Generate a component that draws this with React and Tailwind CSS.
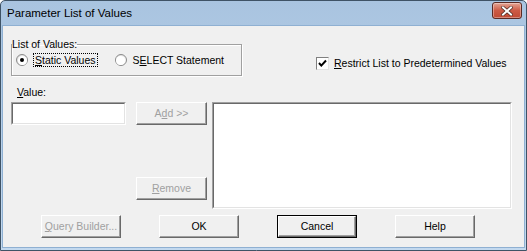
const font = { fontFamily: '"Liberation Sans", Arial, sans-serif' };

function Btn({ children, disabled, isDefault, className = "" }) {
  return (
    <div
      className={`flex h-[23px] items-center justify-center bg-[#f0f0f0] ${
        isDefault ? "border border-black" : ""
      } ${className}`}
    >
      <div className="flex h-full w-full items-center justify-center border-t border-l border-r border-b border-t-white border-l-white border-r-[#696969] border-b-[#696969] shadow-[inset_-1px_-1px_0_#a0a0a0]">
        <span className={`text-[10.5px] leading-none ${disabled ? "text-[#a0a0a0]" : "text-black"}`}>
          {children}
        </span>
      </div>
    </div>
  );
}

function Sunken({ className = "" }) {
  return (
    <div className={`border-t border-l border-r border-b border-t-[#a0a0a0] border-l-[#a0a0a0] border-r-white border-b-white ${className}`}>
      <div className="h-full w-full border-t border-l border-r border-b border-t-[#696969] border-l-[#696969] border-r-[#e3e3e3] border-b-[#e3e3e3] bg-white" />
    </div>
  );
}

function Radio({ checked }) {
  return (
    <div className="flex h-[12px] w-[12px] items-center justify-center rounded-full border border-[#8a8a8a] bg-gradient-to-br from-[#dcdcdc] to-white">
      <div className="flex h-[9px] w-[9px] items-center justify-center rounded-full bg-white">
        {checked && <div className="h-[4px] w-[4px] rounded-full bg-black" />}
      </div>
    </div>
  );
}

export default function App() {
  return (
    <div className="h-[251px] w-[527px] bg-white" style={font}>
      <div className="flex h-full w-full flex-col rounded-t-[5px] border border-[#3f5366] bg-gradient-to-b from-[#a9c4e0] to-[#c3d9ef]">
        {/* title bar */}
        <div className="flex h-[25px] shrink-0 items-center justify-between pl-[6px] pr-[4px]">
          <span className="text-[11.5px] text-black">Parameter List of Values</span>
          <div className="mt-[-6px] flex h-[17px] w-[30px] items-center justify-center rounded-[3px] border border-[#5a2a24] bg-gradient-to-b from-[#e3a595] via-[#cc5a45] to-[#c04a34] shadow-[inset_0_0_0_1px_rgba(255,255,255,0.35)]">
            <svg width="12" height="10" viewBox="0 0 12 10">
              <path d="M2 1.5 L10 8.5 M10 1.5 L2 8.5" stroke="#4a2a22" strokeWidth="3.4" strokeLinecap="square" />
              <path d="M2 1.5 L10 8.5 M10 1.5 L2 8.5" stroke="#ffffff" strokeWidth="2" strokeLinecap="square" />
            </svg>
          </div>
        </div>

        {/* client area */}
        <div className="mx-[2px] mb-[3px] flex flex-1 flex-col bg-[#f0f0f0] pl-[8px] pt-[12px] text-[10.5px] text-black shadow-[0_0_0_1px_#8fb0d2]">
          <div className="flex items-start">
            <fieldset className="h-[38px] w-[231px] border border-[#a0a0a0] pl-[4px] shadow-[1px_1px_0_#fff,inset_1px_1px_0_#fff]">
              <legend className="ml-[-4px] px-0 leading-[12px]">List of Values:</legend>
              <div className="mt-[3px] flex items-center">
                <Radio checked />
                <span className="ml-[5px] border border-dotted border-black px-[1px] leading-[12px]">
                  <span className="underline">S</span>tatic Values
                </span>
                <div className="ml-[17px]">
                  <Radio />
                </div>
                <span className="ml-[6px] leading-[12px]">
                  S<span className="underline">E</span>LECT Statement
                </span>
              </div>
            </fieldset>
            <div className="ml-[74px] mt-[18px] flex items-center">
              <div className="flex h-[13px] w-[13px] items-center justify-center border-t border-l border-r border-b border-t-[#808080] border-l-[#808080] border-r-[#e3e3e3] border-b-[#e3e3e3] bg-white">
                <svg width="9" height="9" viewBox="0 0 9 9">
                  <path d="M1 4 L3.3 6.6 L8 1.5" fill="none" stroke="#000" strokeWidth="2" />
                </svg>
              </div>
              <span className="ml-[5px]">
                <span className="underline">R</span>estrict List to Predetermined Values
              </span>
            </div>
          </div>

          <div className="ml-[6px] mt-[10px] leading-[12px]">
            <span className="underline">V</span>alue:
          </div>

          <div className="mt-[4px] flex items-start">
            <Sunken className="h-[23px] w-[115px] shrink-0" />
            <div className="ml-[10px] flex h-[107px] w-[71px] shrink-0 flex-col justify-between">
              <Btn disabled>
                A<span className="underline">d</span>d &gt;&gt;
              </Btn>
              <Btn disabled className="mb-[9px]">
                <span className="underline">R</span>emove
              </Btn>
            </div>
            <Sunken className="ml-[5px] h-[107px] w-[300px] shrink-0" />
          </div>

          <div className="ml-[30px] mt-[6px] flex gap-[38px]">
            <Btn disabled className="w-[80px]">
              <span className="underline">Q</span>uery Builder...
            </Btn>
            <Btn className="w-[80px]">OK</Btn>
            <Btn isDefault className="w-[80px]">Cancel</Btn>
            <Btn className="w-[80px]">Help</Btn>
          </div>
        </div>
      </div>
    </div>
  );
}
